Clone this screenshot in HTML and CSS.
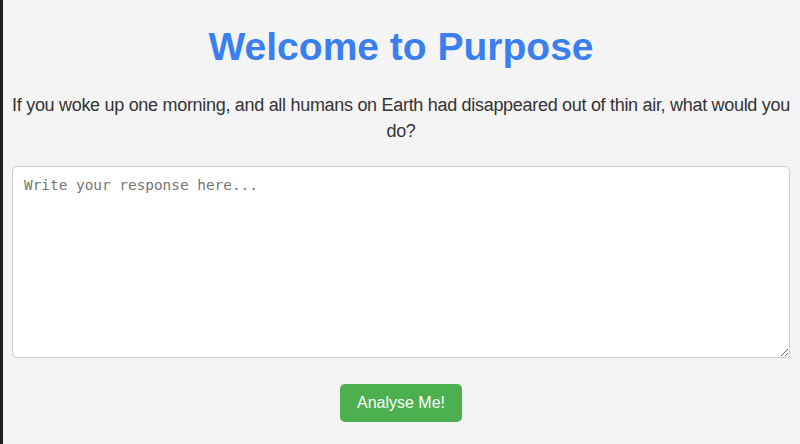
FILE: index.html
```html
<!DOCTYPE html>
<html lang="en">
<head>
<meta charset="utf-8">
<title>Purpose</title>
<link rel="stylesheet" href="styles.css">
</head>
<body>
<main class="container">
  <h1 class="title">Welcome to Purpose</h1>
  <p class="question">If you woke up one morning, and all humans on Earth had disappeared out of thin air, what would you do?</p>
  <textarea class="response" placeholder="Write your response here..."></textarea>
  <div class="actions">
    <button class="analyse-btn" type="button">Analyse Me!</button>
  </div>
</main>
</body>
</html>
```

FILE: styles.css
```css
html, body {
  margin: 0;
  padding: 0;
  height: 100%;
}
body {
  background: #f4f4f4;
  border-left: 3px solid #1f1f1f;
  font-family: "Liberation Sans", Arial, sans-serif;
  color: #333;
  box-sizing: border-box;
  overflow: hidden;
}
.container {
  padding: 0 10px 0 9px;
  display: flex;
  flex-direction: column;
  text-align: center;
}
.title {
  margin: 24px 0 0;
  font-size: 39px;
  line-height: 46px;
  font-weight: bold;
  color: #3a7ff0;
}
.question {
  margin: 22px -5px 0;
  font-size: 18px;
  letter-spacing: -0.3px;
  line-height: 26px;
}
.response {
  margin-top: 22px;
  height: 192px;
  box-sizing: border-box;
  padding: 10px 11px;
  border: 1px solid #ccc;
  border-radius: 5px;
  background: #fff;
  font-family: "DejaVu Sans Mono", monospace;
  font-size: 14.4px;
  color: #333;
  resize: vertical;
}
.response::placeholder {
  color: #757575;
}
.actions {
  display: flex;
  justify-content: center;
  margin-top: 26px;
}
.analyse-btn {
  width: 122px;
  height: 38px;
  background: #4caf50;
  color: #fff;
  border: none;
  border-radius: 5px;
  font-family: "Liberation Sans", Arial, sans-serif;
  font-size: 16px;
  cursor: pointer;
}
```
